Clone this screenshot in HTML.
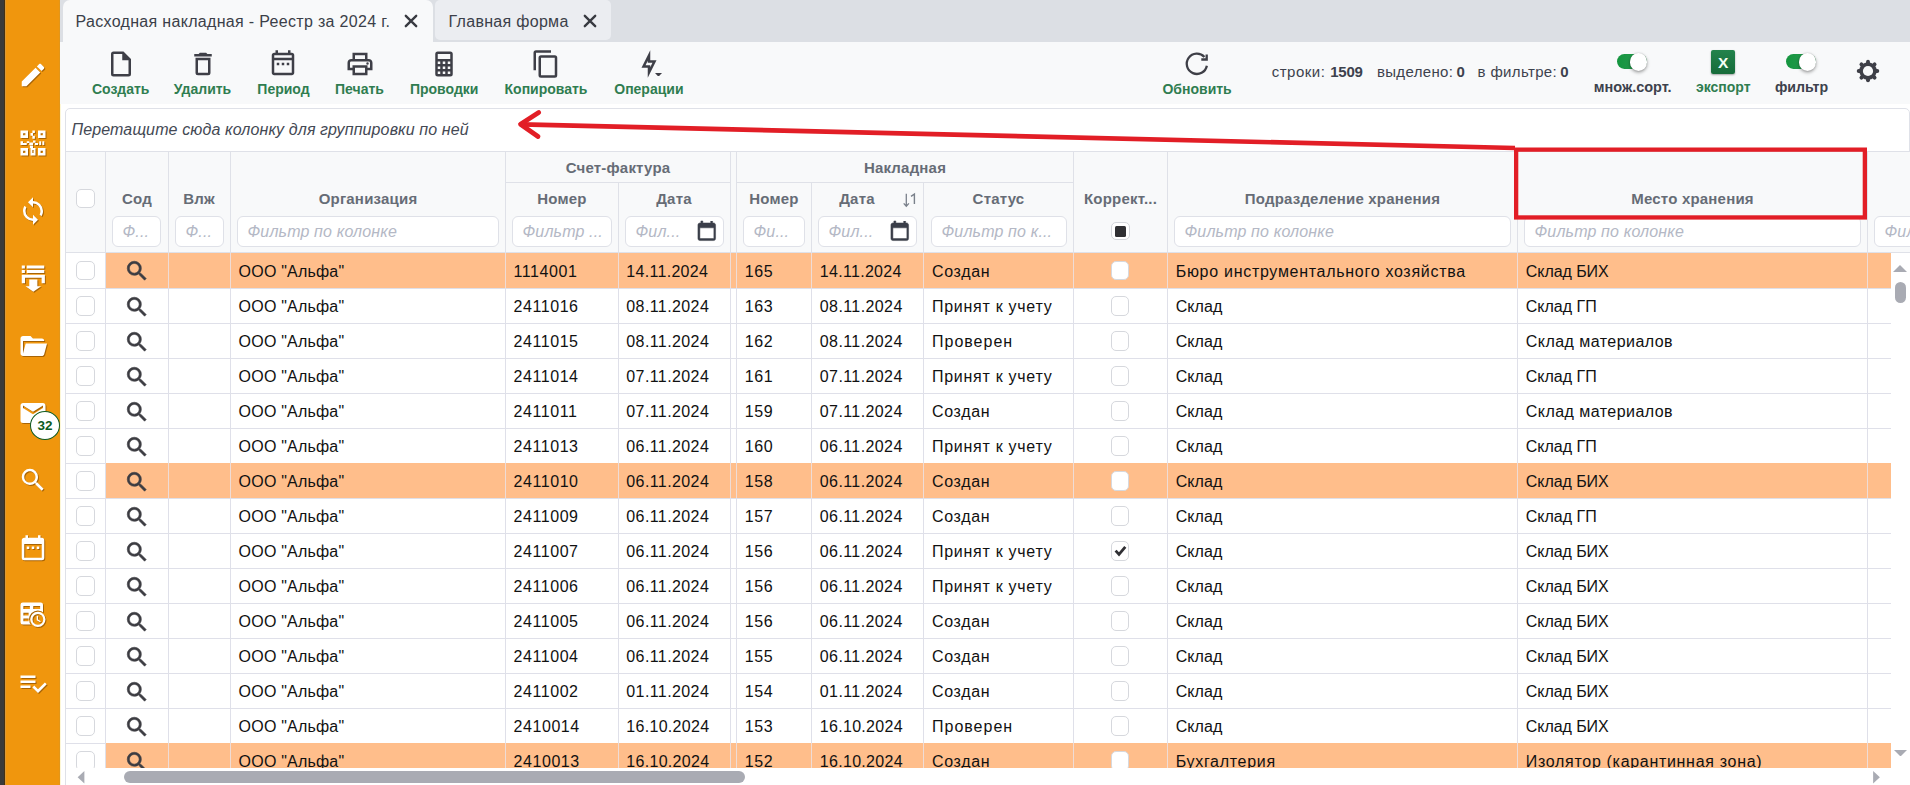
<!DOCTYPE html>
<html lang="ru"><head><meta charset="utf-8"><title>Расходная накладная</title>
<style>
*{box-sizing:border-box;margin:0;padding:0}
html,body{width:1910px;height:785px;overflow:hidden;background:#fff}
body{font-family:"Liberation Sans",sans-serif;position:relative;color:#111}
.abs,.ic,.sic{position:absolute}
.sic{filter:drop-shadow(1px 1px 0.5px rgba(110,60,0,.55))}
.t{position:absolute;white-space:nowrap}
.c{transform:translateX(-50%)}
.lbl{font-size:14px;font-weight:bold;color:#2f7d50;line-height:16px}
.dl{font-size:14px;font-weight:bold;color:#3d424d;line-height:16px}
.cnt{font-size:15px;line-height:18px;color:#3d424d;top:63px}
.hd{font-size:15px;font-weight:bold;color:#666c76;line-height:18px;letter-spacing:.2px}
.cell{font-size:16px;line-height:20px;color:#111}
.inp{position:absolute;height:31px;border:1px solid #dfe1e8;border-radius:6px;background:#fff;top:216px;overflow:hidden}
.inp span{position:absolute;left:9.500px;top:4.500px;letter-spacing:.15px;font-size:16px;line-height:20px;font-style:italic;color:#b4b8c5;white-space:nowrap}
.cb{position:absolute;width:18.500px;height:19.500px;border:1px solid #d6d8dd;border-radius:5px;background:#fff}
.vl{position:absolute;width:1px;background:#dfe1e8}
.hl{position:absolute;height:1px;background:#dfe1e8}
</style></head><body>

<div class="abs" style="left:0;top:0;width:4px;height:785px;background:#3a3a3a"></div>
<div class="abs" style="left:4px;top:0;width:1px;height:785px;background:#46300f"></div>
<div class="abs" style="left:5px;top:0;width:55px;height:785px;background:#f0960d"></div>
<div class="abs" style="left:5px;top:0;width:1px;height:785px;background:#d9993a"></div>
<div class="abs" style="left:59px;top:0;width:1px;height:785px;background:#e2961a"></div>
<div class="abs" style="left:60px;top:0;width:1px;height:785px;background:#fdf7d6"></div>
<svg class="sic" style="left:18px;top:60.25px" width="30" height="30" viewBox="0 0 24 24" fill="#fff"><path d="M20.71,7.04C21.1,6.65 21.1,6 20.71,5.63L18.37,3.29C18,2.9 17.35,2.9 16.96,3.29L15.12,5.12L18.87,8.87M3,17.25V21H6.75L17.81,9.93L14.06,6.18L3,17.25Z"/></svg>
<svg class="sic" style="left:18px;top:127.8px" width="30" height="30" viewBox="0 0 24 24" fill="#fff"><path fill-rule="evenodd" d="M2 2h6v6H2z M4.100 4.100v1.800h1.800V4.100z M16 2h6v6h-6z M18.100 4.100v1.800h1.800V4.100z M2 16h6v6H2z M4.100 18.100v1.800h1.800v-1.800z M16 16h6v6h-6z M18.100 18.100v1.800h1.800v-1.800z M11.500 2h2v2h-2z M10 4h2v2.200h-2z M11.500 6.200h2v2.300h-2z M2 10.500h2v3H2z M4 12h3v1.500H4z M7 10.500h2v1.500H7z M9 11.500h3v2H9z M12 10h2v1.800h-2z M13.500 12h2.500v1.500h-2.500z M17 10.500h1.500v3H17z M19.500 10.500h1.500v3h-1.500z M9.500 14h2.500v2H9.500z M10 16h4v6h-4z M11.500 17.500v2.500h1v-2.500z"/></svg>
<svg class="sic" style="left:18px;top:196px" width="30" height="30" viewBox="0 0 24 24" fill="#fff"><path d="M12,18A6,6 0 0,1 6,12C6,11 6.25,10.03 6.7,9.2L5.24,7.74C4.46,8.97 4,10.43 4,12A8,8 0 0,0 12,20V23L16,19L12,15M12,4V1L8,5L12,9V6A6,6 0 0,1 18,12C18,13 17.75,13.97 17.3,14.8L18.76,16.26C19.54,15.03 20,13.57 20,12A8,8 0 0,0 12,4Z"/></svg>
<svg class="sic" style="left:18px;top:262.8px" width="30" height="30" viewBox="0 0 24 24" fill="#fff"><path d="M3 2h2.500v2.400H3z M7 2h14v2.400H7z M3 5.600h2.500v2.400H3z M7 5.600h14v2.400H7z M3 9.400h18.500v6.800h-2.600v-4.400H5.600v4.400H3z M9 13.200h6.500v5.300h3L12.250 23 6 18.500h3z"/></svg>
<svg class="sic" style="left:18px;top:330.6px" width="30" height="30" viewBox="0 0 24 24" fill="#fff"><path d="M19,20H4C2.89,20 2,19.1 2,18V6C2,4.89 2.89,4 4,4H10L12,6H19A2,2 0 0,1 21,8H21L4,8V18L6.14,10H23.21L20.93,18.5C20.7,19.37 19.92,20 19,20Z"/></svg>
<svg class="sic" style="left:18px;top:398px" width="30" height="30" viewBox="0 0 24 24" fill="#fff"><path d="M20,8L12,13L4,8V6L12,11L20,6M20,4H4C2.89,4 2,4.89 2,6V18A2,2 0 0,0 4,20H20A2,2 0 0,0 22,18V6C22,4.89 21.1,4 20,4Z"/></svg>
<svg class="sic" style="left:18px;top:464.6px" width="30" height="30" viewBox="0 0 24 24" fill="#fff"><path d="M9.5,3A6.5,6.5 0 0,1 16,9.5C16,11.11 15.41,12.59 14.44,13.73L14.71,14H15.5L20.5,19L19,20.5L14,15.5V14.71L13.73,14.44C12.59,15.41 11.11,16 9.5,16A6.5,6.5 0 0,1 3,9.5A6.5,6.5 0 0,1 9.5,3M9.5,5C7,5 5,7 5,9.5C5,12 7,14 9.5,14C12,14 14,12 14,9.5C14,7 12,5 9.5,5Z"/></svg>
<svg class="sic" style="left:18px;top:534px" width="30" height="30" viewBox="0 0 24 24" fill="#fff"><path d="M9,10H7V12H9V10M13,10H11V12H13V10M17,10H15V12H17V10M19,3H18V1H16V3H8V1H6V3H5C3.89,3 3,3.9 3,5V19A2,2 0 0,0 5,21H19A2,2 0 0,0 21,19V5A2,2 0 0,0 19,3M19,19H5V8H19V19Z"/></svg>
<svg class="sic" style="left:18px;top:667.8px" width="30" height="30" viewBox="0 0 24 24" fill="#fff"><path d="M14,10H2V12H14V10M14,6H2V8H14V6M2,16H10V14H2V16M21.5,11.5L23,13L16,20L11.5,15.5L13,14L16,17L21.5,11.5Z"/></svg>
<svg class="sic" style="left:18px;top:599.800px" width="30" height="30" viewBox="0 0 24 24"><defs><mask id="tcm"><rect x="0" y="0" width="24" height="24" fill="#fff"/><circle cx="15.900" cy="15.500" r="7.100" fill="#000"/></mask></defs><path mask="url(#tcm)" fill="#fff" fill-rule="evenodd" d="M3.800 2H18.200A1.800 1.800 0 0 1 20 3.800V17.700A1.800 1.800 0 0 1 18.200 19.500H3.800A1.800 1.800 0 0 1 2 17.700V3.800A1.800 1.800 0 0 1 3.800 2z M4.300 4.700v2.500h5.200V4.700z M12.200 4.700v2.500h5.500V4.700z M4.300 10.200v2.200h4.200v-2.200z M4.300 14.800v2.200h4.200v-2.200z"/><path fill="#fff" fill-rule="evenodd" d="M15.900 9.400a6.100 6.100 0 1 1 0 12.200a6.100 6.100 0 0 1 0-12.200z M15.900 11.200a4.300 4.300 0 1 0 0 8.600a4.300 4.300 0 0 0 0-8.600z"/><path d="M15.500 12.600v3.300l2.500 1.500" stroke="#fff" stroke-width="1.100" fill="none"/></svg>
<div class="abs" style="left:30px;top:411px;width:30px;height:29px;border-radius:50%;background:#fff;border:1.600px solid #0f5a20"></div>
<div class="t c" style="left:45px;top:418px;font-size:13.500px;font-weight:bold;color:#0e5c22;line-height:16px">32</div>
<div class="abs" style="left:60px;top:0;width:1850px;height:42px;background:#dcdfe4"></div>
<div class="abs" style="left:63px;top:0;width:370px;height:43px;background:#f8f9fa;border-radius:7px 7px 0 0"></div>
<div class="abs" style="left:435px;top:0;width:176px;height:39.500px;background:#ebedf1;border-radius:5px"></div>
<div class="t" style="left:75.500px;top:11.800px;font-size:16px;line-height:20px;color:#3b3f49;letter-spacing:.32px">Расходная накладная - Реестр за 2024 г.</div>
<div class="t" style="left:448.500px;top:11.800px;font-size:16px;line-height:20px;color:#3b3f49;letter-spacing:.3px">Главная форма</div>
<svg class="ic" style="left:403.4px;top:13.399999999999999px" width="16" height="16" viewBox="0 0 16 16"><path d="M2.800 2.800L13.200 13.200M13.200 2.800L2.800 13.200" stroke="#383a41" stroke-width="2.350" stroke-linecap="round"/></svg>
<svg class="ic" style="left:582.4px;top:13.399999999999999px" width="16" height="16" viewBox="0 0 16 16"><path d="M2.800 2.800L13.200 13.200M13.200 2.800L2.800 13.200" stroke="#383a41" stroke-width="2.350" stroke-linecap="round"/></svg>
<div class="abs" style="left:60px;top:42px;width:1850px;height:62px;background:#f8f9fa"></div>
<svg class="ic" style="left:106px;top:49.25px" width="30" height="30" viewBox="0 0 24 24" fill="#3e3f47"><path d="M14,2H6A2,2 0 0,0 4,4V20A2,2 0 0,0 6,22H18A2,2 0 0,0 20,20V8L14,2M18,20H6V4H13V9H18V20Z"/></svg>
<svg class="ic" style="left:188px;top:49.25px" width="30" height="30" viewBox="0 0 24 24" fill="#3e3f47"><path d="M6,19A2,2 0 0,0 8,21H16A2,2 0 0,0 18,19V7H6V19M8,9H16V19H8V9M15.5,4L14.5,3H9.5L8.5,4H5V6H19V4H15.5Z"/></svg>
<svg class="ic" style="left:268.15px;top:49.25px" width="30" height="30" viewBox="0 0 24 24" fill="#3e3f47"><path d="M7,11H9V13H7V11M21,5V19C21,20.11 20.11,21 19,21H5C3.89,21 3,20.1 3,19V5C3,3.9 3.9,3 5,3H6V1H8V3H16V1H18V3H19A2,2 0 0,1 21,5M5,7H19V5H5V7M19,19V9H5V19H19M15,13V11H17V13H15M11,13V11H13V13H11Z"/></svg>
<svg class="ic" style="left:344.7px;top:49.25px" width="30" height="30" viewBox="0 0 24 24" fill="#3e3f47"><path d="M19,8C20.66,8 22,9.34 22,11V17H18V21H6V17H2V11C2,9.34 3.34,8 5,8H6V3H18V8H19M8,5V8H16V5H8M16,19V15H8V19H16M18,15H20V11A1,1 0 0,0 19,10H5A1,1 0 0,0 4,11V15H6V13H18V15M19,11.5A1,1 0 0,1 18,12.5A1,1 0 0,1 17,11.5A1,1 0 0,1 18,10.5A1,1 0 0,1 19,11.5Z"/></svg>
<svg class="ic" style="left:428.85px;top:49.25px" width="30" height="30" viewBox="0 0 24 24" fill="#3e3f47"><path d="M7,2H17A2,2 0 0,1 19,4V20A2,2 0 0,1 17,22H7A2,2 0 0,1 5,20V4A2,2 0 0,1 7,2M7,4V8H17V4H7M7,10V12H9V10H7M11,10V12H13V10H11M15,10V12H17V10H15M7,14V16H9V14H7M11,14V16H13V14H11M15,14V16H17V14H15M7,18V20H9V18H7M11,18V20H13V18H11M15,18V20H17V18H15Z"/></svg>
<svg class="ic" style="left:531px;top:49.25px" width="30" height="30" viewBox="0 0 24 24" fill="#3e3f47"><path d="M19,21H8V7H19M19,5H8A2,2 0 0,0 6,7V21A2,2 0 0,0 8,23H19A2,2 0 0,0 21,21V7A2,2 0 0,0 19,5M16,1H4A2,2 0 0,0 2,3V17H4V3H16V1Z"/></svg>
<svg class="ic" style="left:634.3px;top:49.25px" width="30" height="30" viewBox="0 0 24 24" fill="#3e3f47"><path d="M11,9.47V11H14.76L13,14.53V13H9.24L11,9.47M13,1L6,15H11V23L18,9H13V1Z"/></svg>
<div class="t c lbl" style="left:120.7px;top:81px">Создать</div>
<div class="t c lbl" style="left:202.5px;top:81px">Удалить</div>
<div class="t c lbl" style="left:283.5px;top:81px">Период</div>
<div class="t c lbl" style="left:359.5px;top:81px">Печать</div>
<div class="t c lbl" style="left:444.2px;top:81px">Проводки</div>
<div class="t c lbl" style="left:546px;top:81px">Копировать</div>
<div class="t c lbl" style="left:648.9px;top:81px">Операции</div>
<div class="t c lbl" style="left:1197.1px;top:81px">Обновить</div>
<svg class="ic" style="left:655px;top:72.800px" width="7" height="3.700" viewBox="0 0 7 3.700"><path d="M0 0h7L3.500 3.700z" fill="#3d3d45"/></svg>
<svg class="ic" style="left:1182px;top:49px" width="30" height="30" viewBox="0 0 30 30" fill="none" stroke="#3e3f47" stroke-width="2.300"><path d="M24.860 16.740A10.150 10.150 0 1 1 22.440 8.010"/><path d="M19.300 10.500H24.700V5.400" stroke-linejoin="miter"/></svg>
<div class="t cnt" style="left:1271.7px;font-weight:normal;letter-spacing:0.5px">строки:</div>
<div class="t cnt" style="left:1330.2px;font-weight:bold;letter-spacing:-0.2px">1509</div>
<div class="t cnt" style="left:1376.9px;font-weight:normal;letter-spacing:0.35px">выделено:</div>
<div class="t cnt" style="left:1456.4px;font-weight:bold;letter-spacing:0px">0</div>
<div class="t cnt" style="left:1477.6px;font-weight:normal;letter-spacing:0.35px">в фильтре:</div>
<div class="t cnt" style="left:1560.3px;font-weight:bold;letter-spacing:0px">0</div>
<div class="abs" style="left:1616.8px;top:54.4px;width:30px;height:14.800px;border-radius:7.400px;background:linear-gradient(90deg,#14963f,#2f9a55)"></div><div class="abs" style="left:1629.6px;top:53.0px;width:17.600px;height:17.600px;border-radius:50%;background:#fff;box-shadow:0 1.500px 3.500px rgba(0,0,0,.38),0 0 1px rgba(0,0,0,.25)"></div>
<div class="abs" style="left:1785.8px;top:54.4px;width:30px;height:14.800px;border-radius:7.400px;background:linear-gradient(90deg,#14963f,#2f9a55)"></div><div class="abs" style="left:1798.6px;top:53.0px;width:17.600px;height:17.600px;border-radius:50%;background:#fff;box-shadow:0 1.500px 3.500px rgba(0,0,0,.38),0 0 1px rgba(0,0,0,.25)"></div>
<div class="t c dl" style="left:1632.700px;top:79px;font-size:14.500px">множ.сорт.</div>
<div class="t c lbl" style="left:1723.300px;top:79px;font-size:14px">экспорт</div>
<div class="t c dl" style="left:1801.500px;top:79px;font-size:14.200px">фильтр</div>
<div class="abs" style="left:1710.700px;top:50px;width:24.400px;height:24.400px;border-radius:2px;background:linear-gradient(180deg,#23834c,#176b3a);box-shadow:0 1px 2px rgba(0,0,0,.35)"></div>
<div class="t c" style="left:1723.200px;top:53.800px;font-size:15.500px;font-weight:bold;color:#f4fff6;line-height:18px">X</div>
<svg class="ic" style="left:1853.900px;top:57px" width="28" height="28" viewBox="-14 -14 28 28"><g stroke="#3e3f47" stroke-width="3.900" stroke-linecap="round"><line x1="0" y1="-8" x2="0" y2="-9.300" transform="rotate(0)"/><line x1="0" y1="-8" x2="0" y2="-9.300" transform="rotate(45)"/><line x1="0" y1="-8" x2="0" y2="-9.300" transform="rotate(90)"/><line x1="0" y1="-8" x2="0" y2="-9.300" transform="rotate(135)"/><line x1="0" y1="-8" x2="0" y2="-9.300" transform="rotate(180)"/><line x1="0" y1="-8" x2="0" y2="-9.300" transform="rotate(225)"/><line x1="0" y1="-8" x2="0" y2="-9.300" transform="rotate(270)"/><line x1="0" y1="-8" x2="0" y2="-9.300" transform="rotate(315)"/></g><circle r="8.700" fill="#3e3f47"/><circle r="5.100" fill="#f8f9fa"/></svg>
<div class="abs" style="left:65px;top:108px;width:1845px;height:700px;background:#fff;border:1px solid #dfe1e8;border-radius:5px 5px 0 0"></div>
<div class="t" style="left:71.500px;top:119.500px;font-size:16px;line-height:20px;font-style:italic;color:#444954;letter-spacing:.12px">Перетащите сюда колонку для группировки по ней</div>
<div class="abs" style="left:66px;top:152px;width:1844px;height:100px;background:#f8f9fa"></div>
<div class="hl" style="left:65px;top:151px;width:1845px"></div>
<div class="hl" style="left:65px;top:252px;width:1845px"></div>
<div class="hl" style="left:505px;top:182px;width:225px"></div>
<div class="hl" style="left:737px;top:182px;width:336px"></div>
<div class="vl" style="left:105px;top:152px;height:101px"></div>
<div class="vl" style="left:168px;top:152px;height:101px"></div>
<div class="vl" style="left:230px;top:152px;height:101px"></div>
<div class="vl" style="left:505px;top:152px;height:101px"></div>
<div class="vl" style="left:618px;top:183px;height:70px"></div>
<div class="vl" style="left:730px;top:152px;height:101px"></div>
<div class="vl" style="left:736px;top:152px;height:101px"></div>
<div class="vl" style="left:811px;top:183px;height:70px"></div>
<div class="vl" style="left:923px;top:183px;height:70px"></div>
<div class="vl" style="left:1073px;top:152px;height:101px"></div>
<div class="vl" style="left:1167px;top:152px;height:101px"></div>
<div class="vl" style="left:1517px;top:152px;height:101px"></div>
<div class="vl" style="left:1867px;top:152px;height:101px"></div>
<div class="cb" style="left:76px;top:188.700px"></div>
<div class="t c hd" style="left:137px;top:189.700px">Сод</div>
<div class="t c hd" style="left:199px;top:189.700px">Влж</div>
<div class="t c hd" style="left:368px;top:189.700px">Организация</div>
<div class="t c hd" style="left:562px;top:189.700px">Номер</div>
<div class="t c hd" style="left:674px;top:189.700px">Дата</div>
<div class="t c hd" style="left:774px;top:189.700px">Номер</div>
<div class="t c hd" style="left:857px;top:189.700px">Дата</div>
<div class="t c hd" style="left:998.5px;top:189.700px">Статус</div>
<div class="t c hd" style="left:1120.5px;top:189.700px">Коррект...</div>
<div class="t c hd" style="left:1342.5px;top:189.700px">Подразделение хранения</div>
<div class="t c hd" style="left:1692.5px;top:189.700px">Место хранения</div>
<div class="t c hd" style="left:618px;top:158.800px">Счет-фактура</div>
<div class="t c hd" style="left:905px;top:158.800px">Накладная</div>
<svg class="ic" style="left:902px;top:193px" width="9" height="15" viewBox="0 0 9 15" fill="none" stroke="#7a818b" stroke-width="1.300"><path d="M4.300 0.800V13 M1.700 10.400L4.300 13.200L6.900 10.400"/></svg>
<svg class="ic" style="left:910px;top:192px" width="7" height="13" viewBox="0 0 7 13" fill="none" stroke="#7a818b" stroke-width="1.400"><path d="M1 4.300L4.400 2.100V11.900"/></svg>
<div class="inp" style="left:112px;width:49px"><span>Ф...</span></div>
<div class="inp" style="left:175px;width:49px"><span>Ф...</span></div>
<div class="inp" style="left:237px;width:262px"><span>Фильтр по колонке</span></div>
<div class="inp" style="left:512px;width:100px"><span>Фильтр ...</span></div>
<div class="inp" style="left:625px;width:99px"><span>Фил...</span></div>
<div class="inp" style="left:743px;width:62px"><span>Фи...</span></div>
<div class="inp" style="left:818px;width:99px"><span>Фил...</span></div>
<div class="inp" style="left:931px;width:136px"><span>Фильтр по к...</span></div>
<div class="inp" style="left:1174px;width:337px"><span>Фильтр по колонке</span></div>
<div class="inp" style="left:1524px;width:337px"><span>Фильтр по колонке</span></div>
<div class="inp" style="left:1874px;width:60px"><span>Фил</span></div>
<svg class="ic" style="left:695.3px;top:220px" width="23.500" height="23.500" viewBox="0 0 24 24" fill="#3a3e49" stroke="#3a3e49" stroke-width="0.500"><path d="M19,19H5V8H19M16,1V3H8V1H6V3H5C3.89,3 3,3.89 3,5V19A2,2 0 0,0 5,21H19A2,2 0 0,0 21,19V5C21,3.89 20.1,3 19,3H18V1"/></svg>
<svg class="ic" style="left:888.3px;top:220px" width="23.500" height="23.500" viewBox="0 0 24 24" fill="#3a3e49" stroke="#3a3e49" stroke-width="0.500"><path d="M19,19H5V8H19M16,1V3H8V1H6V3H5C3.89,3 3,3.89 3,5V19A2,2 0 0,0 5,21H19A2,2 0 0,0 21,19V5C21,3.89 20.1,3 19,3H18V1"/></svg>
<div class="cb" style="left:1111.200px;top:222.300px;width:18.400px;height:18.200px;border-radius:5px;border-color:#d4d6db"></div>
<div class="abs" style="left:1114.700px;top:225.500px;width:11.600px;height:11.800px;background:#303033;border-radius:1.500px"></div>
<div class="abs" style="left:66px;top:253px;width:1825px;height:36px;overflow:hidden">
<div class="abs" style="left:40px;top:0;width:1785px;height:35px;background:#ffbe8b"></div>
<div class="hl" style="left:0;top:35px;width:1825px;background:#dfe0e9"></div>
<div class="cb" style="left:10px;top:8px;height:19px"></div>
<svg class="ic" style="left:57.800px;top:4.700px" width="26" height="26" viewBox="0 0 24 24" fill="#3c3c42" stroke="#3c3c42" stroke-width="0.550"><path d="M9.5,3A6.5,6.5 0 0,1 16,9.5C16,11.11 15.41,12.59 14.44,13.73L14.71,14H15.5L20.5,19L19,20.5L14,15.5V14.71L13.73,14.44C12.59,15.41 11.11,16 9.5,16A6.5,6.5 0 0,1 3,9.5A6.5,6.5 0 0,1 9.5,3M9.5,5C7,5 5,7 5,9.5C5,12 7,14 9.5,14C12,14 14,12 14,9.5C14,7 12,5 9.5,5Z"/></svg>
<div class="t cell" style="left:172.6px;top:8.5px;letter-spacing:0.2px">ООО "Альфа"</div>
<div class="t cell" style="left:447.6px;top:8.5px;letter-spacing:0.55px">1114001</div>
<div class="t cell" style="left:560.3px;top:8.5px;letter-spacing:0.3px">14.11.2024</div>
<div class="t cell" style="left:678.8px;top:8.5px;letter-spacing:0.6px">165</div>
<div class="t cell" style="left:753.8px;top:8.5px;letter-spacing:0.3px">14.11.2024</div>
<div class="t cell" style="left:866px;top:8.5px;letter-spacing:0.66px">Создан</div>
<div class="t cell" style="left:1109.7px;top:8.5px;letter-spacing:0.71px">Бюро инструментального хозяйства</div>
<div class="t cell" style="left:1459.8px;top:8.5px;letter-spacing:-0.07px">Склад БИХ</div>
<div class="cb" style="left:1044.8px;top:8px;height:19px"></div>
</div>
<div class="abs" style="left:66px;top:289px;width:1825px;height:35px;overflow:hidden">
<div class="hl" style="left:0;top:34px;width:1825px;background:#dfe0e9"></div>
<div class="cb" style="left:10px;top:7.2px;height:19.5px"></div>
<svg class="ic" style="left:57.800px;top:4.700px" width="26" height="26" viewBox="0 0 24 24" fill="#3c3c42" stroke="#3c3c42" stroke-width="0.550"><path d="M9.5,3A6.5,6.5 0 0,1 16,9.5C16,11.11 15.41,12.59 14.44,13.73L14.71,14H15.5L20.5,19L19,20.5L14,15.5V14.71L13.73,14.44C12.59,15.41 11.11,16 9.5,16A6.5,6.5 0 0,1 3,9.5A6.5,6.5 0 0,1 9.5,3M9.5,5C7,5 5,7 5,9.5C5,12 7,14 9.5,14C12,14 14,12 14,9.5C14,7 12,5 9.5,5Z"/></svg>
<div class="t cell" style="left:172.6px;top:7.5px;letter-spacing:0.2px">ООО "Альфа"</div>
<div class="t cell" style="left:447.6px;top:7.5px;letter-spacing:0.55px">2411016</div>
<div class="t cell" style="left:560.3px;top:7.5px;letter-spacing:0.4px">08.11.2024</div>
<div class="t cell" style="left:678.8px;top:7.5px;letter-spacing:0.6px">163</div>
<div class="t cell" style="left:753.8px;top:7.5px;letter-spacing:0.4px">08.11.2024</div>
<div class="t cell" style="left:866px;top:7.5px;letter-spacing:0.72px">Принят к учету</div>
<div class="t cell" style="left:1109.7px;top:7.5px;letter-spacing:0.07px">Склад</div>
<div class="t cell" style="left:1459.8px;top:7.5px;letter-spacing:0.0px">Склад ГП</div>
<div class="cb" style="left:1044.8px;top:7.2px;height:19.5px"></div>
</div>
<div class="abs" style="left:66px;top:324px;width:1825px;height:35px;overflow:hidden">
<div class="hl" style="left:0;top:34px;width:1825px;background:#dfe0e9"></div>
<div class="cb" style="left:10px;top:7.2px;height:19.5px"></div>
<svg class="ic" style="left:57.800px;top:4.700px" width="26" height="26" viewBox="0 0 24 24" fill="#3c3c42" stroke="#3c3c42" stroke-width="0.550"><path d="M9.5,3A6.5,6.5 0 0,1 16,9.5C16,11.11 15.41,12.59 14.44,13.73L14.71,14H15.5L20.5,19L19,20.5L14,15.5V14.71L13.73,14.44C12.59,15.41 11.11,16 9.5,16A6.5,6.5 0 0,1 3,9.5A6.5,6.5 0 0,1 9.5,3M9.5,5C7,5 5,7 5,9.5C5,12 7,14 9.5,14C12,14 14,12 14,9.5C14,7 12,5 9.5,5Z"/></svg>
<div class="t cell" style="left:172.6px;top:7.5px;letter-spacing:0.2px">ООО "Альфа"</div>
<div class="t cell" style="left:447.6px;top:7.5px;letter-spacing:0.55px">2411015</div>
<div class="t cell" style="left:560.3px;top:7.5px;letter-spacing:0.4px">08.11.2024</div>
<div class="t cell" style="left:678.8px;top:7.5px;letter-spacing:0.6px">162</div>
<div class="t cell" style="left:753.8px;top:7.5px;letter-spacing:0.4px">08.11.2024</div>
<div class="t cell" style="left:866px;top:7.5px;letter-spacing:1.0px">Проверен</div>
<div class="t cell" style="left:1109.7px;top:7.5px;letter-spacing:0.07px">Склад</div>
<div class="t cell" style="left:1459.8px;top:7.5px;letter-spacing:0.45px">Склад материалов</div>
<div class="cb" style="left:1044.8px;top:7.2px;height:19.5px"></div>
</div>
<div class="abs" style="left:66px;top:359px;width:1825px;height:35px;overflow:hidden">
<div class="hl" style="left:0;top:34px;width:1825px;background:#dfe0e9"></div>
<div class="cb" style="left:10px;top:7.2px;height:19.5px"></div>
<svg class="ic" style="left:57.800px;top:4.700px" width="26" height="26" viewBox="0 0 24 24" fill="#3c3c42" stroke="#3c3c42" stroke-width="0.550"><path d="M9.5,3A6.5,6.5 0 0,1 16,9.5C16,11.11 15.41,12.59 14.44,13.73L14.71,14H15.5L20.5,19L19,20.5L14,15.5V14.71L13.73,14.44C12.59,15.41 11.11,16 9.5,16A6.5,6.5 0 0,1 3,9.5A6.5,6.5 0 0,1 9.5,3M9.5,5C7,5 5,7 5,9.5C5,12 7,14 9.5,14C12,14 14,12 14,9.5C14,7 12,5 9.5,5Z"/></svg>
<div class="t cell" style="left:172.6px;top:7.5px;letter-spacing:0.2px">ООО "Альфа"</div>
<div class="t cell" style="left:447.6px;top:7.5px;letter-spacing:0.55px">2411014</div>
<div class="t cell" style="left:560.3px;top:7.5px;letter-spacing:0.4px">07.11.2024</div>
<div class="t cell" style="left:678.8px;top:7.5px;letter-spacing:0.6px">161</div>
<div class="t cell" style="left:753.8px;top:7.5px;letter-spacing:0.4px">07.11.2024</div>
<div class="t cell" style="left:866px;top:7.5px;letter-spacing:0.72px">Принят к учету</div>
<div class="t cell" style="left:1109.7px;top:7.5px;letter-spacing:0.07px">Склад</div>
<div class="t cell" style="left:1459.8px;top:7.5px;letter-spacing:0.0px">Склад ГП</div>
<div class="cb" style="left:1044.8px;top:7.2px;height:19.5px"></div>
</div>
<div class="abs" style="left:66px;top:394px;width:1825px;height:35px;overflow:hidden">
<div class="hl" style="left:0;top:34px;width:1825px;background:#dfe0e9"></div>
<div class="cb" style="left:10px;top:7.2px;height:19.5px"></div>
<svg class="ic" style="left:57.800px;top:4.700px" width="26" height="26" viewBox="0 0 24 24" fill="#3c3c42" stroke="#3c3c42" stroke-width="0.550"><path d="M9.5,3A6.5,6.5 0 0,1 16,9.5C16,11.11 15.41,12.59 14.44,13.73L14.71,14H15.5L20.5,19L19,20.5L14,15.5V14.71L13.73,14.44C12.59,15.41 11.11,16 9.5,16A6.5,6.5 0 0,1 3,9.5A6.5,6.5 0 0,1 9.5,3M9.5,5C7,5 5,7 5,9.5C5,12 7,14 9.5,14C12,14 14,12 14,9.5C14,7 12,5 9.5,5Z"/></svg>
<div class="t cell" style="left:172.6px;top:7.5px;letter-spacing:0.2px">ООО "Альфа"</div>
<div class="t cell" style="left:447.6px;top:7.5px;letter-spacing:0.55px">2411011</div>
<div class="t cell" style="left:560.3px;top:7.5px;letter-spacing:0.4px">07.11.2024</div>
<div class="t cell" style="left:678.8px;top:7.5px;letter-spacing:0.6px">159</div>
<div class="t cell" style="left:753.8px;top:7.5px;letter-spacing:0.4px">07.11.2024</div>
<div class="t cell" style="left:866px;top:7.5px;letter-spacing:0.66px">Создан</div>
<div class="t cell" style="left:1109.7px;top:7.5px;letter-spacing:0.07px">Склад</div>
<div class="t cell" style="left:1459.8px;top:7.5px;letter-spacing:0.45px">Склад материалов</div>
<div class="cb" style="left:1044.8px;top:7.2px;height:19.5px"></div>
</div>
<div class="abs" style="left:66px;top:429px;width:1825px;height:35px;overflow:hidden">
<div class="hl" style="left:0;top:34px;width:1825px;background:#dfe0e9"></div>
<div class="cb" style="left:10px;top:7.2px;height:19.5px"></div>
<svg class="ic" style="left:57.800px;top:4.700px" width="26" height="26" viewBox="0 0 24 24" fill="#3c3c42" stroke="#3c3c42" stroke-width="0.550"><path d="M9.5,3A6.5,6.5 0 0,1 16,9.5C16,11.11 15.41,12.59 14.44,13.73L14.71,14H15.5L20.5,19L19,20.5L14,15.5V14.71L13.73,14.44C12.59,15.41 11.11,16 9.5,16A6.5,6.5 0 0,1 3,9.5A6.5,6.5 0 0,1 9.5,3M9.5,5C7,5 5,7 5,9.5C5,12 7,14 9.5,14C12,14 14,12 14,9.5C14,7 12,5 9.5,5Z"/></svg>
<div class="t cell" style="left:172.6px;top:7.5px;letter-spacing:0.2px">ООО "Альфа"</div>
<div class="t cell" style="left:447.6px;top:7.5px;letter-spacing:0.55px">2411013</div>
<div class="t cell" style="left:560.3px;top:7.5px;letter-spacing:0.4px">06.11.2024</div>
<div class="t cell" style="left:678.8px;top:7.5px;letter-spacing:0.6px">160</div>
<div class="t cell" style="left:753.8px;top:7.5px;letter-spacing:0.4px">06.11.2024</div>
<div class="t cell" style="left:866px;top:7.5px;letter-spacing:0.72px">Принят к учету</div>
<div class="t cell" style="left:1109.7px;top:7.5px;letter-spacing:0.07px">Склад</div>
<div class="t cell" style="left:1459.8px;top:7.5px;letter-spacing:0.0px">Склад ГП</div>
<div class="cb" style="left:1044.8px;top:7.2px;height:19.5px"></div>
</div>
<div class="abs" style="left:106px;top:463px;width:1785px;height:1px;background:#ffbe8b"></div>
<div class="abs" style="left:66px;top:464px;width:1825px;height:35px;overflow:hidden">
<div class="abs" style="left:40px;top:0;width:1785px;height:34px;background:#ffbe8b"></div>
<div class="hl" style="left:0;top:34px;width:1825px;background:#dfe0e9"></div>
<div class="cb" style="left:10px;top:7.2px;height:19.5px"></div>
<svg class="ic" style="left:57.800px;top:4.700px" width="26" height="26" viewBox="0 0 24 24" fill="#3c3c42" stroke="#3c3c42" stroke-width="0.550"><path d="M9.5,3A6.5,6.5 0 0,1 16,9.5C16,11.11 15.41,12.59 14.44,13.73L14.71,14H15.5L20.5,19L19,20.5L14,15.5V14.71L13.73,14.44C12.59,15.41 11.11,16 9.5,16A6.5,6.5 0 0,1 3,9.5A6.5,6.5 0 0,1 9.5,3M9.5,5C7,5 5,7 5,9.5C5,12 7,14 9.5,14C12,14 14,12 14,9.5C14,7 12,5 9.5,5Z"/></svg>
<div class="t cell" style="left:172.6px;top:7.5px;letter-spacing:0.2px">ООО "Альфа"</div>
<div class="t cell" style="left:447.6px;top:7.5px;letter-spacing:0.55px">2411010</div>
<div class="t cell" style="left:560.3px;top:7.5px;letter-spacing:0.4px">06.11.2024</div>
<div class="t cell" style="left:678.8px;top:7.5px;letter-spacing:0.6px">158</div>
<div class="t cell" style="left:753.8px;top:7.5px;letter-spacing:0.4px">06.11.2024</div>
<div class="t cell" style="left:866px;top:7.5px;letter-spacing:0.66px">Создан</div>
<div class="t cell" style="left:1109.7px;top:7.5px;letter-spacing:0.07px">Склад</div>
<div class="t cell" style="left:1459.8px;top:7.5px;letter-spacing:-0.07px">Склад БИХ</div>
<div class="cb" style="left:1044.8px;top:7.2px;height:19.5px"></div>
</div>
<div class="abs" style="left:66px;top:499px;width:1825px;height:35px;overflow:hidden">
<div class="hl" style="left:0;top:34px;width:1825px;background:#dfe0e9"></div>
<div class="cb" style="left:10px;top:7.2px;height:19.5px"></div>
<svg class="ic" style="left:57.800px;top:4.700px" width="26" height="26" viewBox="0 0 24 24" fill="#3c3c42" stroke="#3c3c42" stroke-width="0.550"><path d="M9.5,3A6.5,6.5 0 0,1 16,9.5C16,11.11 15.41,12.59 14.44,13.73L14.71,14H15.5L20.5,19L19,20.5L14,15.5V14.71L13.73,14.44C12.59,15.41 11.11,16 9.5,16A6.5,6.5 0 0,1 3,9.5A6.5,6.5 0 0,1 9.5,3M9.5,5C7,5 5,7 5,9.5C5,12 7,14 9.5,14C12,14 14,12 14,9.5C14,7 12,5 9.5,5Z"/></svg>
<div class="t cell" style="left:172.6px;top:7.5px;letter-spacing:0.2px">ООО "Альфа"</div>
<div class="t cell" style="left:447.6px;top:7.5px;letter-spacing:0.55px">2411009</div>
<div class="t cell" style="left:560.3px;top:7.5px;letter-spacing:0.4px">06.11.2024</div>
<div class="t cell" style="left:678.8px;top:7.5px;letter-spacing:0.6px">157</div>
<div class="t cell" style="left:753.8px;top:7.5px;letter-spacing:0.4px">06.11.2024</div>
<div class="t cell" style="left:866px;top:7.5px;letter-spacing:0.66px">Создан</div>
<div class="t cell" style="left:1109.7px;top:7.5px;letter-spacing:0.07px">Склад</div>
<div class="t cell" style="left:1459.8px;top:7.5px;letter-spacing:0.0px">Склад ГП</div>
<div class="cb" style="left:1044.8px;top:7.2px;height:19.5px"></div>
</div>
<div class="abs" style="left:66px;top:534px;width:1825px;height:35px;overflow:hidden">
<div class="hl" style="left:0;top:34px;width:1825px;background:#dfe0e9"></div>
<div class="cb" style="left:10px;top:7.2px;height:19.5px"></div>
<svg class="ic" style="left:57.800px;top:4.700px" width="26" height="26" viewBox="0 0 24 24" fill="#3c3c42" stroke="#3c3c42" stroke-width="0.550"><path d="M9.5,3A6.5,6.5 0 0,1 16,9.5C16,11.11 15.41,12.59 14.44,13.73L14.71,14H15.5L20.5,19L19,20.5L14,15.5V14.71L13.73,14.44C12.59,15.41 11.11,16 9.5,16A6.5,6.5 0 0,1 3,9.5A6.5,6.5 0 0,1 9.5,3M9.5,5C7,5 5,7 5,9.5C5,12 7,14 9.5,14C12,14 14,12 14,9.5C14,7 12,5 9.5,5Z"/></svg>
<div class="t cell" style="left:172.6px;top:7.5px;letter-spacing:0.2px">ООО "Альфа"</div>
<div class="t cell" style="left:447.6px;top:7.5px;letter-spacing:0.55px">2411007</div>
<div class="t cell" style="left:560.3px;top:7.5px;letter-spacing:0.4px">06.11.2024</div>
<div class="t cell" style="left:678.8px;top:7.5px;letter-spacing:0.6px">156</div>
<div class="t cell" style="left:753.8px;top:7.5px;letter-spacing:0.4px">06.11.2024</div>
<div class="t cell" style="left:866px;top:7.5px;letter-spacing:0.72px">Принят к учету</div>
<div class="t cell" style="left:1109.7px;top:7.5px;letter-spacing:0.07px">Склад</div>
<div class="t cell" style="left:1459.8px;top:7.5px;letter-spacing:-0.07px">Склад БИХ</div>
<div class="cb" style="left:1044.8px;top:7.2px;height:19.5px"></div>
<svg class="ic" style="left:1044.5px;top:7.5px" width="19" height="19" viewBox="0 0 19 19"><path d="M4.600 8.600 L8 12.400 L14.300 4.800" stroke="#303034" stroke-width="2.800" fill="none"/></svg>
</div>
<div class="abs" style="left:66px;top:569px;width:1825px;height:35px;overflow:hidden">
<div class="hl" style="left:0;top:34px;width:1825px;background:#dfe0e9"></div>
<div class="cb" style="left:10px;top:7.2px;height:19.5px"></div>
<svg class="ic" style="left:57.800px;top:4.700px" width="26" height="26" viewBox="0 0 24 24" fill="#3c3c42" stroke="#3c3c42" stroke-width="0.550"><path d="M9.5,3A6.5,6.5 0 0,1 16,9.5C16,11.11 15.41,12.59 14.44,13.73L14.71,14H15.5L20.5,19L19,20.5L14,15.5V14.71L13.73,14.44C12.59,15.41 11.11,16 9.5,16A6.5,6.5 0 0,1 3,9.5A6.5,6.5 0 0,1 9.5,3M9.5,5C7,5 5,7 5,9.5C5,12 7,14 9.5,14C12,14 14,12 14,9.5C14,7 12,5 9.5,5Z"/></svg>
<div class="t cell" style="left:172.6px;top:7.5px;letter-spacing:0.2px">ООО "Альфа"</div>
<div class="t cell" style="left:447.6px;top:7.5px;letter-spacing:0.55px">2411006</div>
<div class="t cell" style="left:560.3px;top:7.5px;letter-spacing:0.4px">06.11.2024</div>
<div class="t cell" style="left:678.8px;top:7.5px;letter-spacing:0.6px">156</div>
<div class="t cell" style="left:753.8px;top:7.5px;letter-spacing:0.4px">06.11.2024</div>
<div class="t cell" style="left:866px;top:7.5px;letter-spacing:0.72px">Принят к учету</div>
<div class="t cell" style="left:1109.7px;top:7.5px;letter-spacing:0.07px">Склад</div>
<div class="t cell" style="left:1459.8px;top:7.5px;letter-spacing:-0.07px">Склад БИХ</div>
<div class="cb" style="left:1044.8px;top:7.2px;height:19.5px"></div>
</div>
<div class="abs" style="left:66px;top:604px;width:1825px;height:35px;overflow:hidden">
<div class="hl" style="left:0;top:34px;width:1825px;background:#dfe0e9"></div>
<div class="cb" style="left:10px;top:7.2px;height:19.5px"></div>
<svg class="ic" style="left:57.800px;top:4.700px" width="26" height="26" viewBox="0 0 24 24" fill="#3c3c42" stroke="#3c3c42" stroke-width="0.550"><path d="M9.5,3A6.5,6.5 0 0,1 16,9.5C16,11.11 15.41,12.59 14.44,13.73L14.71,14H15.5L20.5,19L19,20.5L14,15.5V14.71L13.73,14.44C12.59,15.41 11.11,16 9.5,16A6.5,6.5 0 0,1 3,9.5A6.5,6.5 0 0,1 9.5,3M9.5,5C7,5 5,7 5,9.5C5,12 7,14 9.5,14C12,14 14,12 14,9.5C14,7 12,5 9.5,5Z"/></svg>
<div class="t cell" style="left:172.6px;top:7.5px;letter-spacing:0.2px">ООО "Альфа"</div>
<div class="t cell" style="left:447.6px;top:7.5px;letter-spacing:0.55px">2411005</div>
<div class="t cell" style="left:560.3px;top:7.5px;letter-spacing:0.4px">06.11.2024</div>
<div class="t cell" style="left:678.8px;top:7.5px;letter-spacing:0.6px">156</div>
<div class="t cell" style="left:753.8px;top:7.5px;letter-spacing:0.4px">06.11.2024</div>
<div class="t cell" style="left:866px;top:7.5px;letter-spacing:0.66px">Создан</div>
<div class="t cell" style="left:1109.7px;top:7.5px;letter-spacing:0.07px">Склад</div>
<div class="t cell" style="left:1459.8px;top:7.5px;letter-spacing:-0.07px">Склад БИХ</div>
<div class="cb" style="left:1044.8px;top:7.2px;height:19.5px"></div>
</div>
<div class="abs" style="left:66px;top:639px;width:1825px;height:35px;overflow:hidden">
<div class="hl" style="left:0;top:34px;width:1825px;background:#dfe0e9"></div>
<div class="cb" style="left:10px;top:7.2px;height:19.5px"></div>
<svg class="ic" style="left:57.800px;top:4.700px" width="26" height="26" viewBox="0 0 24 24" fill="#3c3c42" stroke="#3c3c42" stroke-width="0.550"><path d="M9.5,3A6.5,6.5 0 0,1 16,9.5C16,11.11 15.41,12.59 14.44,13.73L14.71,14H15.5L20.5,19L19,20.5L14,15.5V14.71L13.73,14.44C12.59,15.41 11.11,16 9.5,16A6.5,6.5 0 0,1 3,9.5A6.5,6.5 0 0,1 9.5,3M9.5,5C7,5 5,7 5,9.5C5,12 7,14 9.5,14C12,14 14,12 14,9.5C14,7 12,5 9.5,5Z"/></svg>
<div class="t cell" style="left:172.6px;top:7.5px;letter-spacing:0.2px">ООО "Альфа"</div>
<div class="t cell" style="left:447.6px;top:7.5px;letter-spacing:0.55px">2411004</div>
<div class="t cell" style="left:560.3px;top:7.5px;letter-spacing:0.4px">06.11.2024</div>
<div class="t cell" style="left:678.8px;top:7.5px;letter-spacing:0.6px">155</div>
<div class="t cell" style="left:753.8px;top:7.5px;letter-spacing:0.4px">06.11.2024</div>
<div class="t cell" style="left:866px;top:7.5px;letter-spacing:0.66px">Создан</div>
<div class="t cell" style="left:1109.7px;top:7.5px;letter-spacing:0.07px">Склад</div>
<div class="t cell" style="left:1459.8px;top:7.5px;letter-spacing:-0.07px">Склад БИХ</div>
<div class="cb" style="left:1044.8px;top:7.2px;height:19.5px"></div>
</div>
<div class="abs" style="left:66px;top:674px;width:1825px;height:35px;overflow:hidden">
<div class="hl" style="left:0;top:34px;width:1825px;background:#dfe0e9"></div>
<div class="cb" style="left:10px;top:7.2px;height:19.5px"></div>
<svg class="ic" style="left:57.800px;top:4.700px" width="26" height="26" viewBox="0 0 24 24" fill="#3c3c42" stroke="#3c3c42" stroke-width="0.550"><path d="M9.5,3A6.5,6.5 0 0,1 16,9.5C16,11.11 15.41,12.59 14.44,13.73L14.71,14H15.5L20.5,19L19,20.5L14,15.5V14.71L13.73,14.44C12.59,15.41 11.11,16 9.5,16A6.5,6.5 0 0,1 3,9.5A6.5,6.5 0 0,1 9.5,3M9.5,5C7,5 5,7 5,9.5C5,12 7,14 9.5,14C12,14 14,12 14,9.5C14,7 12,5 9.5,5Z"/></svg>
<div class="t cell" style="left:172.6px;top:7.5px;letter-spacing:0.2px">ООО "Альфа"</div>
<div class="t cell" style="left:447.6px;top:7.5px;letter-spacing:0.55px">2411002</div>
<div class="t cell" style="left:560.3px;top:7.5px;letter-spacing:0.4px">01.11.2024</div>
<div class="t cell" style="left:678.8px;top:7.5px;letter-spacing:0.6px">154</div>
<div class="t cell" style="left:753.8px;top:7.5px;letter-spacing:0.4px">01.11.2024</div>
<div class="t cell" style="left:866px;top:7.5px;letter-spacing:0.66px">Создан</div>
<div class="t cell" style="left:1109.7px;top:7.5px;letter-spacing:0.07px">Склад</div>
<div class="t cell" style="left:1459.8px;top:7.5px;letter-spacing:-0.07px">Склад БИХ</div>
<div class="cb" style="left:1044.8px;top:7.2px;height:19.5px"></div>
</div>
<div class="abs" style="left:66px;top:709px;width:1825px;height:35px;overflow:hidden">
<div class="hl" style="left:0;top:34px;width:1825px;background:#dfe0e9"></div>
<div class="cb" style="left:10px;top:7.2px;height:19.5px"></div>
<svg class="ic" style="left:57.800px;top:4.700px" width="26" height="26" viewBox="0 0 24 24" fill="#3c3c42" stroke="#3c3c42" stroke-width="0.550"><path d="M9.5,3A6.5,6.5 0 0,1 16,9.5C16,11.11 15.41,12.59 14.44,13.73L14.71,14H15.5L20.5,19L19,20.5L14,15.5V14.71L13.73,14.44C12.59,15.41 11.11,16 9.5,16A6.5,6.5 0 0,1 3,9.5A6.5,6.5 0 0,1 9.5,3M9.5,5C7,5 5,7 5,9.5C5,12 7,14 9.5,14C12,14 14,12 14,9.5C14,7 12,5 9.5,5Z"/></svg>
<div class="t cell" style="left:172.6px;top:7.5px;letter-spacing:0.2px">ООО "Альфа"</div>
<div class="t cell" style="left:447.6px;top:7.5px;letter-spacing:0.55px">2410014</div>
<div class="t cell" style="left:560.3px;top:7.5px;letter-spacing:0.3px">16.10.2024</div>
<div class="t cell" style="left:678.8px;top:7.5px;letter-spacing:0.6px">153</div>
<div class="t cell" style="left:753.8px;top:7.5px;letter-spacing:0.3px">16.10.2024</div>
<div class="t cell" style="left:866px;top:7.5px;letter-spacing:1.0px">Проверен</div>
<div class="t cell" style="left:1109.7px;top:7.5px;letter-spacing:0.07px">Склад</div>
<div class="t cell" style="left:1459.8px;top:7.5px;letter-spacing:-0.07px">Склад БИХ</div>
<div class="cb" style="left:1044.8px;top:7.2px;height:19.5px"></div>
</div>
<div class="abs" style="left:106px;top:743px;width:1785px;height:1px;background:#ffbe8b"></div>
<div class="abs" style="left:66px;top:744px;width:1825px;height:25px;overflow:hidden">
<div class="abs" style="left:40px;top:0;width:1785px;height:24px;background:#ffbe8b"></div>
<div class="hl" style="left:0;top:34px;width:1825px;background:#dfe0e9"></div>
<div class="cb" style="left:10px;top:7.2px;height:19.5px"></div>
<svg class="ic" style="left:57.800px;top:4.700px" width="26" height="26" viewBox="0 0 24 24" fill="#3c3c42" stroke="#3c3c42" stroke-width="0.550"><path d="M9.5,3A6.5,6.5 0 0,1 16,9.5C16,11.11 15.41,12.59 14.44,13.73L14.71,14H15.5L20.5,19L19,20.5L14,15.5V14.71L13.73,14.44C12.59,15.41 11.11,16 9.5,16A6.5,6.5 0 0,1 3,9.5A6.5,6.5 0 0,1 9.5,3M9.5,5C7,5 5,7 5,9.5C5,12 7,14 9.5,14C12,14 14,12 14,9.5C14,7 12,5 9.5,5Z"/></svg>
<div class="t cell" style="left:172.6px;top:7.5px;letter-spacing:0.2px">ООО "Альфа"</div>
<div class="t cell" style="left:447.6px;top:7.5px;letter-spacing:0.55px">2410013</div>
<div class="t cell" style="left:560.3px;top:7.5px;letter-spacing:0.3px">16.10.2024</div>
<div class="t cell" style="left:678.8px;top:7.5px;letter-spacing:0.6px">152</div>
<div class="t cell" style="left:753.8px;top:7.5px;letter-spacing:0.3px">16.10.2024</div>
<div class="t cell" style="left:866px;top:7.5px;letter-spacing:0.66px">Создан</div>
<div class="t cell" style="left:1109.7px;top:7.5px;letter-spacing:0.7px">Бухгалтерия</div>
<div class="t cell" style="left:1459.8px;top:7.5px;letter-spacing:0.69px">Изолятор (карантинная зона)</div>
<div class="cb" style="left:1044.8px;top:7.2px;height:19.5px"></div>
</div>
<div class="vl" style="left:105px;top:253px;height:515px;background:#dfe0e9"></div>
<div class="vl" style="left:168px;top:253px;height:515px;background:#dfe0e9"></div>
<div class="vl" style="left:230px;top:253px;height:515px;background:#dfe0e9"></div>
<div class="vl" style="left:505px;top:253px;height:515px;background:#dfe0e9"></div>
<div class="vl" style="left:618px;top:253px;height:515px;background:#dfe0e9"></div>
<div class="vl" style="left:730px;top:253px;height:515px;background:#dfe0e9"></div>
<div class="vl" style="left:736px;top:253px;height:515px;background:#dfe0e9"></div>
<div class="vl" style="left:811px;top:253px;height:515px;background:#dfe0e9"></div>
<div class="vl" style="left:923px;top:253px;height:515px;background:#dfe0e9"></div>
<div class="vl" style="left:1073px;top:253px;height:515px;background:#dfe0e9"></div>
<div class="vl" style="left:1167px;top:253px;height:515px;background:#dfe0e9"></div>
<div class="vl" style="left:1517px;top:253px;height:515px;background:#dfe0e9"></div>
<div class="vl" style="left:1867px;top:253px;height:515px;background:#dfe0e9"></div>
<div class="vl" style="left:168px;top:253px;height:35px;background:#efdcd6"></div>
<div class="vl" style="left:230px;top:253px;height:35px;background:#efdcd6"></div>
<div class="vl" style="left:505px;top:253px;height:35px;background:#efdcd6"></div>
<div class="vl" style="left:618px;top:253px;height:35px;background:#efdcd6"></div>
<div class="vl" style="left:730px;top:253px;height:35px;background:#efdcd6"></div>
<div class="vl" style="left:736px;top:253px;height:35px;background:#efdcd6"></div>
<div class="vl" style="left:811px;top:253px;height:35px;background:#efdcd6"></div>
<div class="vl" style="left:923px;top:253px;height:35px;background:#efdcd6"></div>
<div class="vl" style="left:1073px;top:253px;height:35px;background:#efdcd6"></div>
<div class="vl" style="left:1167px;top:253px;height:35px;background:#efdcd6"></div>
<div class="vl" style="left:1517px;top:253px;height:35px;background:#efdcd6"></div>
<div class="vl" style="left:1867px;top:253px;height:35px;background:#efdcd6"></div>
<div class="vl" style="left:168px;top:463px;height:35px;background:#efdcd6"></div>
<div class="vl" style="left:230px;top:463px;height:35px;background:#efdcd6"></div>
<div class="vl" style="left:505px;top:463px;height:35px;background:#efdcd6"></div>
<div class="vl" style="left:618px;top:463px;height:35px;background:#efdcd6"></div>
<div class="vl" style="left:730px;top:463px;height:35px;background:#efdcd6"></div>
<div class="vl" style="left:736px;top:463px;height:35px;background:#efdcd6"></div>
<div class="vl" style="left:811px;top:463px;height:35px;background:#efdcd6"></div>
<div class="vl" style="left:923px;top:463px;height:35px;background:#efdcd6"></div>
<div class="vl" style="left:1073px;top:463px;height:35px;background:#efdcd6"></div>
<div class="vl" style="left:1167px;top:463px;height:35px;background:#efdcd6"></div>
<div class="vl" style="left:1517px;top:463px;height:35px;background:#efdcd6"></div>
<div class="vl" style="left:1867px;top:463px;height:35px;background:#efdcd6"></div>
<div class="vl" style="left:168px;top:743px;height:25px;background:#efdcd6"></div>
<div class="vl" style="left:230px;top:743px;height:25px;background:#efdcd6"></div>
<div class="vl" style="left:505px;top:743px;height:25px;background:#efdcd6"></div>
<div class="vl" style="left:618px;top:743px;height:25px;background:#efdcd6"></div>
<div class="vl" style="left:730px;top:743px;height:25px;background:#efdcd6"></div>
<div class="vl" style="left:736px;top:743px;height:25px;background:#efdcd6"></div>
<div class="vl" style="left:811px;top:743px;height:25px;background:#efdcd6"></div>
<div class="vl" style="left:923px;top:743px;height:25px;background:#efdcd6"></div>
<div class="vl" style="left:1073px;top:743px;height:25px;background:#efdcd6"></div>
<div class="vl" style="left:1167px;top:743px;height:25px;background:#efdcd6"></div>
<div class="vl" style="left:1517px;top:743px;height:25px;background:#efdcd6"></div>
<div class="vl" style="left:1867px;top:743px;height:25px;background:#efdcd6"></div>
<div class="abs" style="left:1891px;top:253px;width:19px;height:515px;background:#fff"></div>
<div class="abs" style="left:66px;top:768px;width:1844px;height:17px;background:#fff"></div>
<svg class="ic" style="left:1893px;top:265px" width="14" height="7" viewBox="0 0 14 7"><path d="M0 7h14L7 0z" fill="#a9abb3"/></svg>
<svg class="ic" style="left:1893.500px;top:749.500px" width="13" height="6.500" viewBox="0 0 14 7"><path d="M0 0h14L7 7z" fill="#a9abb3"/></svg>
<div class="abs" style="left:1895px;top:281.500px;width:11px;height:21px;border-radius:5.500px;background:#a9abb3"></div>
<svg class="ic" style="left:76.500px;top:771px" width="8" height="12.500" viewBox="0 0 7 13"><path d="M7 0v13L0 6.500z" fill="#a9abb3"/></svg>
<svg class="ic" style="left:1873px;top:771px" width="7" height="12.500" viewBox="0 0 7 13"><path d="M0 0v13L7 6.500z" fill="#a9abb3"/></svg>
<div class="abs" style="left:124px;top:771.300px;width:621px;height:12px;border-radius:6px;background:#a9abb3"></div>
<svg class="ic" style="left:0;top:0" width="1910" height="785" viewBox="0 0 1910 785" fill="none"><rect x="1516.150" y="149.650" width="348.700" height="67.800" stroke="#e21e26" stroke-width="4.300"/><path d="M1515 148 L521 124.400" stroke="#e21e26" stroke-width="4.700"/><path d="M538.700 112.500 L520.500 124.200 L538 136.500" stroke="#e21e26" stroke-width="4.800" stroke-linecap="round" stroke-linejoin="round"/></svg>
</body></html>
